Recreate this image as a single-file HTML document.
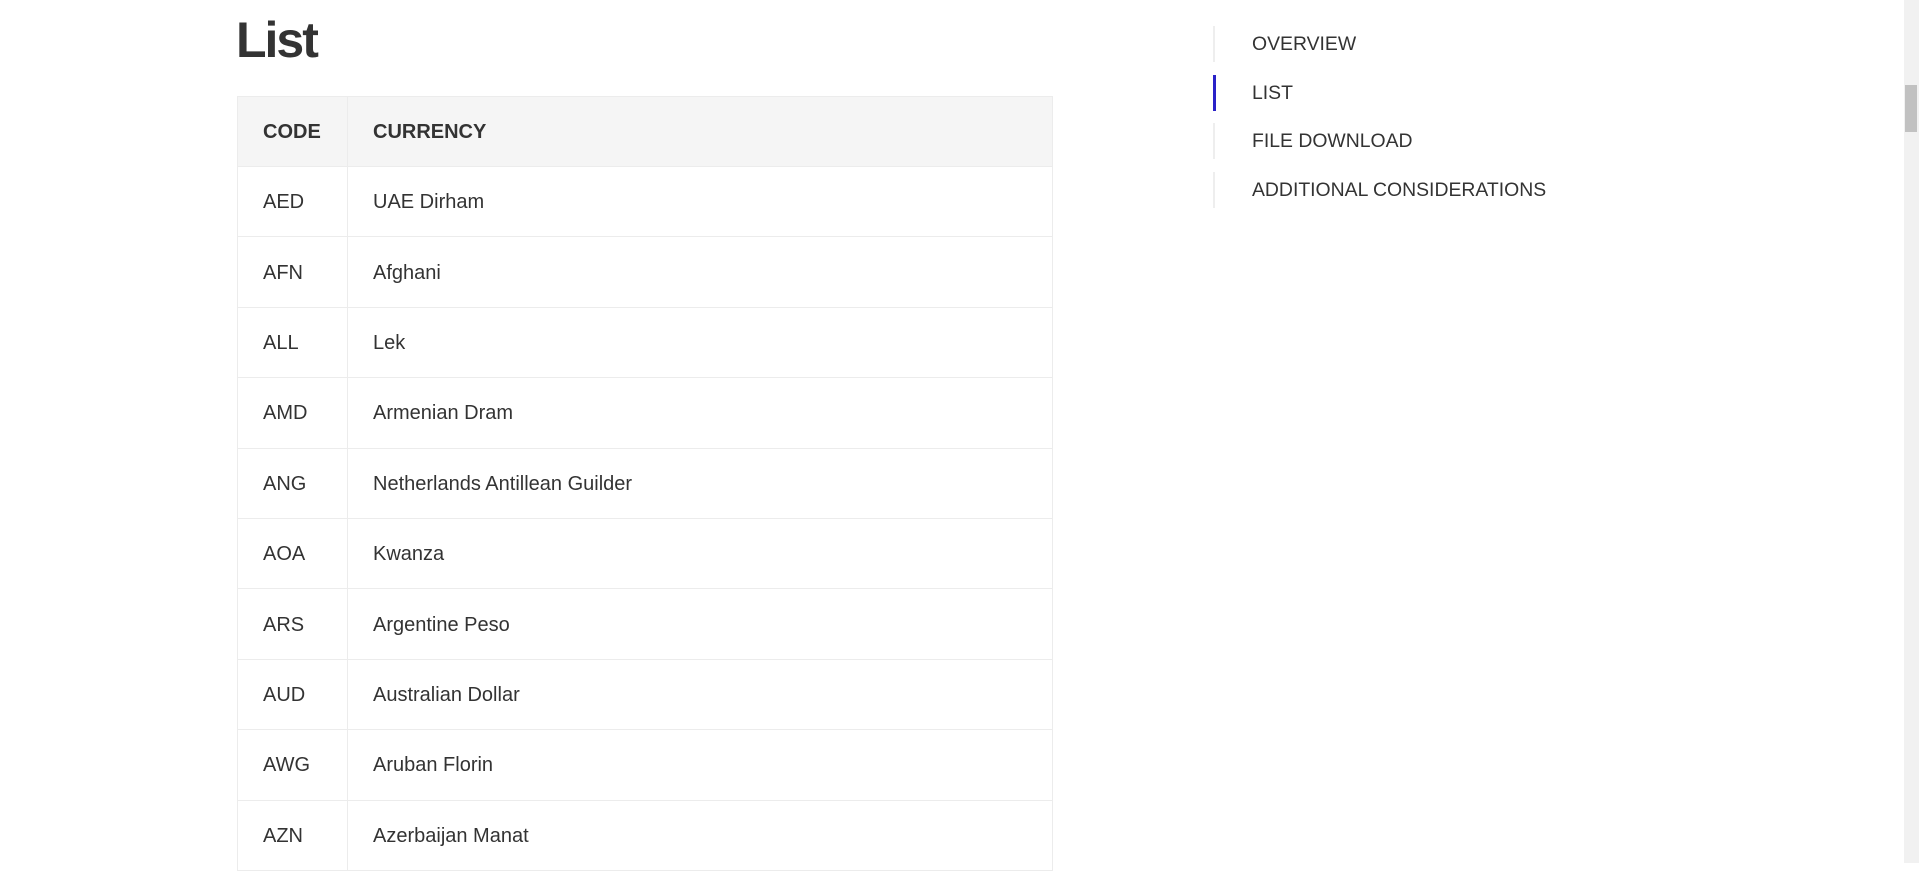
<!DOCTYPE html>
<html><head><meta charset="utf-8"><style>
html,body{margin:0;padding:0;width:1919px;height:863px;overflow:hidden;background:#fff;font-family:"Liberation Sans",sans-serif;color:#333}
h1{position:absolute;left:236px;top:11px;margin:0;font-size:50px;line-height:58px;font-weight:bold;letter-spacing:-2px;color:#333}
table{position:absolute;left:237px;top:96px;width:816px;border-collapse:collapse;font-size:20px}
td,th{border:1px solid #ececec;text-align:left;padding:2px 0 0 25px;height:67.4px;box-sizing:border-box}
td{height:70.4px}
th{background:#f5f5f5;font-weight:bold;height:70px;color:#333}
td:first-child,th:first-child{width:110px}
.nav{position:absolute;left:1213px;top:26px}
.nav div{border-left:2px solid #eee;height:36px;line-height:36px;padding-left:37px;font-size:19.4px;margin-bottom:12.5px;color:#333}
.nav div.a{border-left:3px solid #2a22c8;height:36px;padding-left:36px}
.sb{position:absolute;right:0;top:0;width:15px;height:863px;background:#f1f1f1}
.th{position:absolute;right:2px;top:85px;width:12px;height:47px;background:#c1c1c1}
</style></head><body>
<h1>List</h1>
<table>
<tr><th>CODE</th><th>CURRENCY</th></tr>
<tr><td>AED</td><td>UAE Dirham</td></tr>
<tr><td>AFN</td><td>Afghani</td></tr>
<tr><td>ALL</td><td>Lek</td></tr>
<tr><td>AMD</td><td>Armenian Dram</td></tr>
<tr><td>ANG</td><td>Netherlands Antillean Guilder</td></tr>
<tr><td>AOA</td><td>Kwanza</td></tr>
<tr><td>ARS</td><td>Argentine Peso</td></tr>
<tr><td>AUD</td><td>Australian Dollar</td></tr>
<tr><td>AWG</td><td>Aruban Florin</td></tr>
<tr><td>AZN</td><td>Azerbaijan Manat</td></tr>
</table>
<div class="nav">
<div>OVERVIEW</div>
<div class="a">LIST</div>
<div>FILE DOWNLOAD</div>
<div>ADDITIONAL CONSIDERATIONS</div>
</div>
<div class="sb"><div class="th"></div></div>
</body></html>
